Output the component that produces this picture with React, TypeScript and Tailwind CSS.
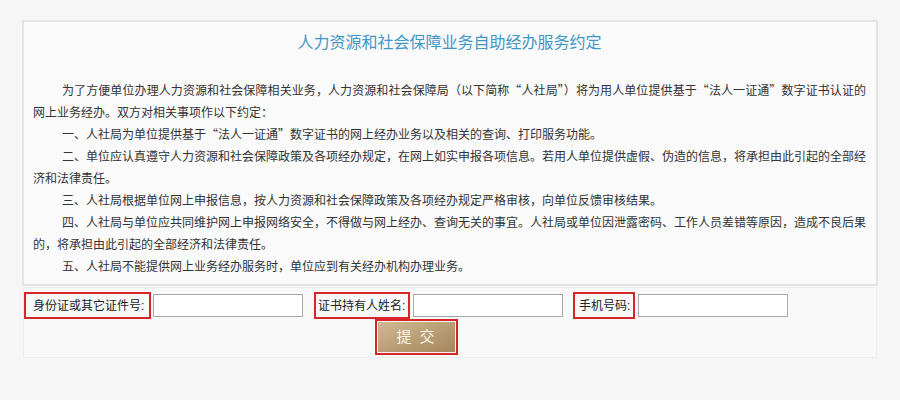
const paragraphs: { indent: boolean; lines: string[] }[] = [
  {
    indent: true,
    lines: [
      "为了方便单位办理人力资源和社会保障相关业务，人力资源和社会保障局（以下简称“人社局”）将为用人单位提供基于“法人一证通”数字证书认证的",
      "网上业务经办。双方对相关事项作以下约定：",
    ],
  },
  {
    indent: true,
    lines: ["一、人社局为单位提供基于“法人一证通”数字证书的网上经办业务以及相关的查询、打印服务功能。"],
  },
  {
    indent: true,
    lines: [
      "二、单位应认真遵守人力资源和社会保障政策及各项经办规定，在网上如实申报各项信息。若用人单位提供虚假、伪造的信息，将承担由此引起的全部经",
      "济和法律责任。",
    ],
  },
  {
    indent: true,
    lines: ["三、人社局根据单位网上申报信息，按人力资源和社会保障政策及各项经办规定严格审核，向单位反馈审核结果。"],
  },
  {
    indent: true,
    lines: [
      "四、人社局与单位应共同维护网上申报网络安全，不得做与网上经办、查询无关的事宜。人社局或单位因泄露密码、工作人员差错等原因，造成不良后果",
      "的，将承担由此引起的全部经济和法律责任。",
    ],
  },
  {
    indent: true,
    lines: ["五、人社局不能提供网上业务经办服务时，单位应到有关经办机构办理业务。"],
  },
];

function Field({ label, boxW, padL, inputMl }: { label: string; boxW: string; padL: string; inputMl: string }) {
  return (
    <div className="flex items-center">
      <div className={`flex h-[27px] items-center border-2 border-[#d6262c] ${boxW} ${padL} whitespace-nowrap text-[12px] text-[#222]`}>
        {label}
      </div>
      <input className={`${inputMl} h-[23px] w-[150px] border border-[#a9a9a9] bg-white outline-none`} />
    </div>
  );
}

export default function App() {
  return (
    <div
      className="min-h-[400px] w-full bg-[#f6f6f6] pt-[20px]"
      style={{ fontFamily: '"Liberation Sans", "Noto Sans CJK SC", sans-serif' }}
    >
      <section className="mx-[22px] border-2 border-[#e4e4e4] bg-[#fafafa] pl-[9px] pr-[10px] pt-[9px] pb-[7px]">
        <h1 className="text-center text-[16px] leading-[24px] text-[#4197c8]">
          人力资源和社会保障业务自助经办服务约定
        </h1>
        <div className="mt-[24px] font-['Noto_Sans_CJK_SC',sans-serif] text-[12px] leading-[22px] text-[#333] [font-feature-settings:'fwid']">
          {paragraphs.map((p, i) => (
            <div key={i}>
              {p.lines.map((line, j) => (
                <div
                  key={j}
                  className={`${j === 0 && p.indent ? "pl-[29px]" : ""} ${
                    j < p.lines.length - 1 ? "text-justify [text-align-last:justify]" : ""
                  }`}
                >
                  {line}
                </div>
              ))}
            </div>
          ))}
        </div>
      </section>

      <section className="mx-[23px] mt-[1px] h-[71px] border border-[#ededed] bg-[#f8f8f8] pt-[4px]">
        <div className="flex items-center">
          <Field label="身份证或其它证件号:" boxW="w-[127px]" padL="pl-[7px]" inputMl="ml-[2px]" />
          <div className="ml-[11px]">
            <Field label="证书持有人姓名:" boxW="w-[96px]" padL="pl-[2px]" inputMl="ml-[3px]" />
          </div>
          <div className="ml-[10px]">
            <Field label="手机号码:" boxW="w-[62px]" padL="pl-[4px]" inputMl="ml-[3px]" />
          </div>
        </div>
        <div className="ml-[351px] w-[83px] border-2 border-[#d6262c] p-px">
          <button className="h-[30px] w-[77px] bg-gradient-to-br from-[#d0ba93] to-[#a4865b] text-[15px] tracking-[2px] text-[#fbf6ec]">
            提 交
          </button>
        </div>
      </section>
    </div>
  );
}
